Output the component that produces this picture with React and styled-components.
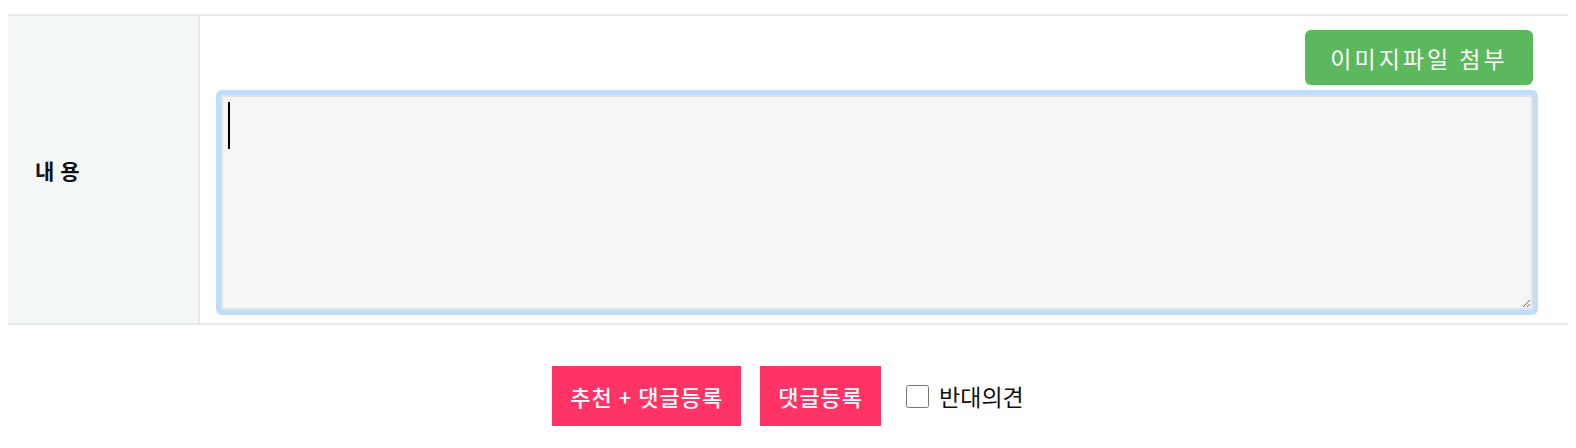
import React from "react";
import styled, { createGlobalStyle } from "styled-components";

const GlobalStyle = createGlobalStyle`
  body {
    margin: 8px;
    background: #fff;
    font-family: "Noto Sans CJK KR", "Noto Sans", sans-serif;
    color: #111;
  }
`;

const Wrap = styled.div`
  padding-top: 6px;
`;

const Table = styled.div`
  display: grid;
  grid-template-columns: 192px 1fr;
  border-top: 2px solid #e8e8e8;
  border-bottom: 2px solid #e8e8e8;
`;

const Label = styled.div`
  display: flex;
  align-items: center;
  padding-left: 27px;
  background: #f4f7f8;
  border-right: 2px solid #e8e8e8;
  font-size: 21px;
  font-weight: 700;
  letter-spacing: 6px;
`;

const Cell = styled.div`
  display: flex;
  flex-direction: column;
  padding: 14px 35px 13px 16px;
`;

const AttachButton = styled.button`
  align-self: flex-end;
  width: 228px;
  height: 55px;
  border: 0;
  border-radius: 6px;
  background: #5cb85c;
  color: #fff;
  font-family: inherit;
  font-size: 23px;
  letter-spacing: 3px;
  cursor: pointer;
`;

const Editor = styled.div`
  position: relative;
  margin: 10px 0 0 5px;
`;

const TextArea = styled.textarea`
  display: block;
  box-sizing: border-box;
  width: 100%;
  height: 215px;
  padding: 5px;
  border: 2px solid #e2e2e2;
  border-radius: 2px;
  background: #f6f6f6;
  box-shadow: 0 0 0 5px #c1ddfa;
  outline: none;
  font-family: inherit;
  font-size: 16px;
  line-height: 47px;
  caret-color: #000;
`;

const Caret = styled.span`
  position: absolute;
  left: 7px;
  top: 7px;
  width: 2px;
  height: 47px;
  background: #000;
  pointer-events: none;
`;

const Actions = styled.div`
  display: flex;
  align-items: center;
  justify-content: center;
  gap: 19px;
  margin-top: 41px;
`;

const PinkButton = styled.button`
  height: 60px;
  padding: 0 18px;
  border: 0;
  background: #ff3366;
  color: #fff;
  font-family: inherit;
  font-size: 22px;
  font-weight: 500;
  letter-spacing: 1px;
  cursor: pointer;
`;

const Check = styled.label`
  display: flex;
  align-items: center;
  gap: 10px;
  margin-left: 6px;
  font-size: 23px;

  input {
    width: 23px;
    height: 23px;
    margin: 0;
  }
`;

export default function App() {
  return (
    <Wrap>
      <GlobalStyle />
      <Table>
        <Label>내용</Label>
        <Cell>
          <AttachButton>이미지파일 첨부</AttachButton>
          <Editor>
            <TextArea />
            <Caret />
          </Editor>
        </Cell>
      </Table>
      <Actions>
        <PinkButton>추천 + 댓글등록</PinkButton>
        <PinkButton>댓글등록</PinkButton>
        <Check>
          <input type="checkbox" />
          반대의견
        </Check>
      </Actions>
    </Wrap>
  );
}
